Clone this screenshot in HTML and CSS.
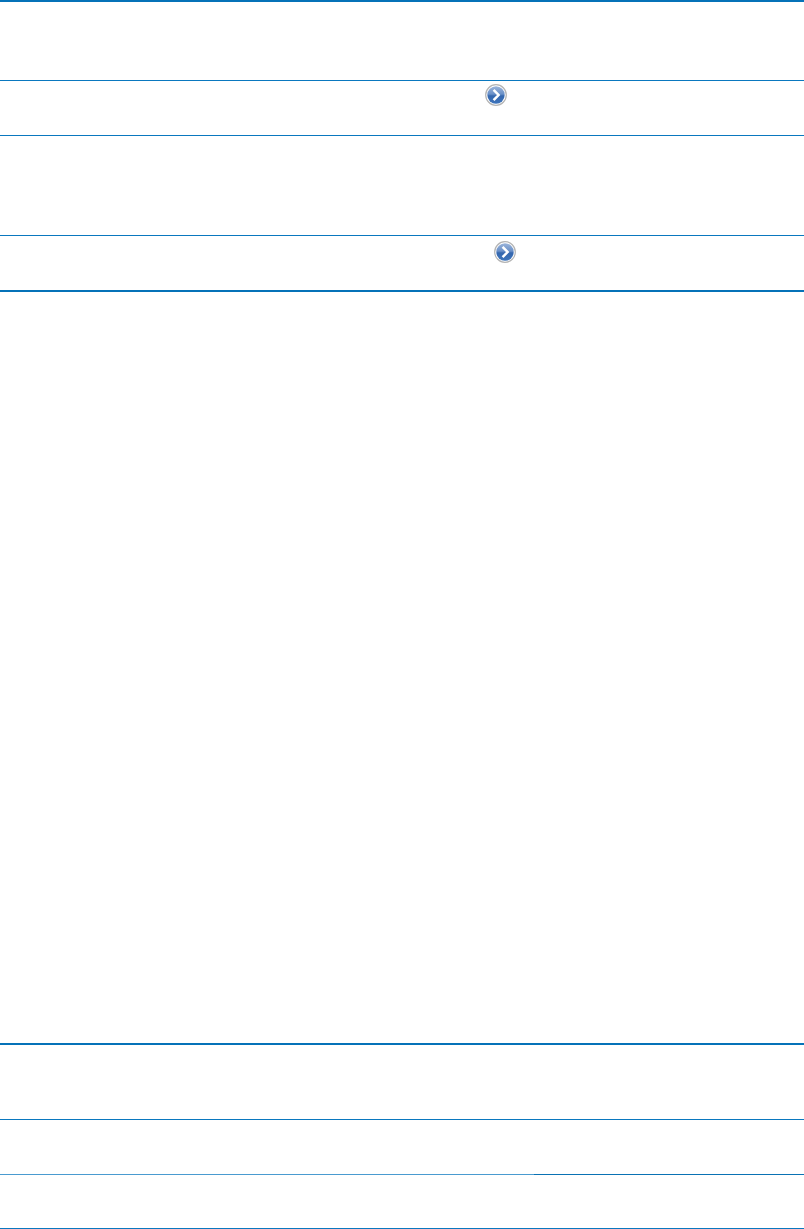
FILE: index.html
```html
<!DOCTYPE html>
<html lang="en">
<head>
<meta charset="utf-8">
<title>Table</title>
<link rel="stylesheet" href="styles.css">
</head>
<body>
<svg class="defs" width="0" height="0" aria-hidden="true">
  <defs>
    <linearGradient id="disc" x1="0" y1="0" x2="0" y2="1">
      <stop offset="0" stop-color="#9ab4da"/>
      <stop offset="0.45" stop-color="#6a90c8"/>
      <stop offset="0.55" stop-color="#3567ae"/>
      <stop offset="1" stop-color="#3d74bb"/>
    </linearGradient>
    <symbol id="go" viewBox="0 0 22 22">
      <circle cx="11" cy="11" r="10.3" fill="#fff" stroke="#b4b4b4" stroke-width="1.2"/>
      <circle cx="11" cy="11" r="8.7" fill="url(#disc)"/>
      <path d="M8.6 5.8 13.6 11 8.6 16.2" fill="none" stroke="#fff" stroke-width="2.5"/>
    </symbol>
  </defs>
</svg>
<main class="table">
  <div class="row thick h-78"></div>
  <div class="row thin h-54 icon-a"><svg class="go" width="22" height="22"><use href="#go"/></svg></div>
  <div class="row thin h-99"></div>
  <div class="row thin h-54 icon-b"><svg class="go" width="22" height="22"><use href="#go"/></svg></div>
  <div class="row thick h-751"></div>
  <div class="row thick h-74"></div>
  <div class="row thin h-54"></div>
  <div class="rule-split"><div class="rule-light"></div><div class="rule-dark"></div></div>
  <div class="row h-53"></div>
  <div class="row thin end"></div>
</main>
</body>
</html>
```
FILE: styles.css
```css
html, body {
  margin: 0;
  padding: 0;
  background: #fff;
  font-family: "Liberation Sans", Arial, sans-serif;
}
.defs { display: block; height: 0; }
.table {
  display: flex;
  flex-direction: column;
  width: 804px;
  height: 1229px;
  overflow: hidden;
}
.row { flex: none; display: flex; align-items: flex-start; }
.thick { border-top: 2px solid #0572b8; }
.thin { border-top: 1px solid #0a78bf; }
.rule-split { flex: none; display: flex; height: 1px; }
.rule-light { width: 534px; background: #4a9bd0; }
.rule-dark { flex: 1; background: #0a72b4; }
.h-78 { height: 78px; }
.h-54 { height: 54px; }
.h-99 { height: 99px; }
.h-751 { height: 751px; }
.h-74 { height: 74px; }
.h-53 { height: 53px; }
.end { height: 0; }
.go { display: block; }
.icon-a { padding: 3px 0 0 485px; box-sizing: border-box; height: 55px; }
.icon-b { padding: 5px 0 0 494px; box-sizing: border-box; height: 55px; }
```
